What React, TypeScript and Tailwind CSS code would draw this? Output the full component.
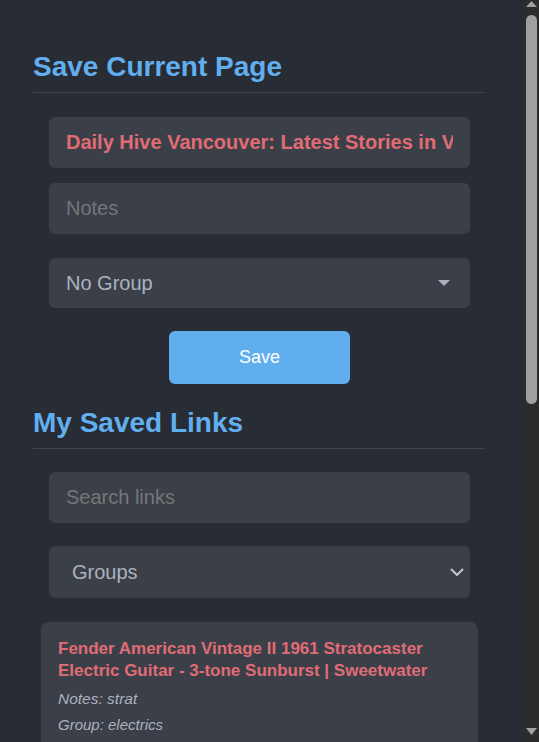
import React from "react";

function FakeScrollbar() {
  return (
    <div className="flex h-[742px] w-[15px] shrink-0 flex-col bg-[#2c2c2c]">
      <svg width="15" height="15" viewBox="0 0 15 15" className="shrink-0">
        <path d="M2 7 L13 7 L7.5 1 Z" fill="#a0a0a0" />
      </svg>
      <div className="mx-[2px] h-[389px] rounded-full bg-[#a0a0a0]" />
      <div className="flex-1" />
      <svg width="15" height="15" viewBox="0 0 15 15" className="shrink-0">
        <path d="M2 1 L13 1 L7.5 8 Z" fill="#a0a0a0" />
      </svg>
    </div>
  );
}

export default function App() {
  return (
    <div
      className="flex h-[742px] w-[539px] bg-[#282c34]"
      style={{ fontFamily: '"Liberation Sans", Arial, sans-serif' }}
    >
      <div className="h-[742px] flex-1 overflow-hidden">
        <div className="min-h-[1361px] pl-[33px] pt-[51px]">
          <section className="w-[452px]">
            <h2 className="border-b border-[#3e4451] pb-[9px] text-[28px] font-bold leading-[32px] text-[#61afef]">
              Save Current Page
            </h2>
            <div className="ml-4 mt-6 flex w-[421px] flex-col">
              <input
                readOnly
                defaultValue="Daily Hive Vancouver: Latest Stories in Vancouver, BC"
                className="h-[51px] w-full rounded-md bg-[#3b3f48] px-[17px] text-[20px] font-bold text-[#e06c75] outline-none"
              />
              <input
                placeholder="Notes"
                className="mt-[15px] h-[51px] w-full rounded-md bg-[#3b3f48] px-[17px] text-[20px] text-[#abb2bf] outline-none placeholder:text-[#767676]"
              />
              <div className="relative mt-6">
                <select className="h-[50px] w-full appearance-none rounded-md bg-[#3b3f48] px-[17px] text-[20px] text-[#abb2bf] outline-none">
                  <option>No Group</option>
                </select>
                <svg
                  className="pointer-events-none absolute right-[20px] top-[22px]"
                  width="12"
                  height="6"
                  viewBox="0 0 12 6"
                >
                  <path d="M0 0 H12 L6 6 Z" fill="#aab0bd" />
                </svg>
              </div>
              <button className="mx-auto mt-[23px] h-[53px] w-[181px] rounded-md bg-[#61aeee] text-[18px] text-white">
                Save
              </button>
            </div>
          </section>

          <section className="mt-[23px] w-[452px]">
            <h2 className="border-b border-[#3e4451] pb-[9px] text-[28px] font-bold leading-[32px] text-[#61afef]">
              My Saved Links
            </h2>
            <div className="ml-4 mt-[23px] flex w-[421px] flex-col">
              <input
                placeholder="Search links"
                className="h-[51px] w-full rounded-md bg-[#3b3f48] px-[17px] text-[20px] text-[#abb2bf] outline-none placeholder:text-[#767676]"
              />
              <div className="relative mt-[23px]">
                <select className="h-[52px] w-full appearance-none rounded-md bg-[#3b3f48] pl-[23px] pr-[17px] text-[20px] text-[#abb2bf] outline-none">
                  <option>Groups</option>
                </select>
                <svg
                  className="pointer-events-none absolute right-[6px] top-[22px]"
                  width="14"
                  height="8"
                  viewBox="0 0 14 8"
                >
                  <path
                    d="M1 1 L7 7 L13 1"
                    fill="none"
                    stroke="#c3c7cf"
                    strokeWidth="2"
                  />
                </svg>
              </div>
            </div>
            <div className="ml-2 mt-6 w-[437px] rounded-lg bg-[#3b3f48] px-[17px] pb-4 pt-4">
              <div className="text-[17px] font-bold leading-[22px] text-[#e06c75]">
                Fender American Vintage II 1961 Stratocaster Electric Guitar - 3-tone Sunburst | Sweetwater
              </div>
              <div className="mt-[7px] text-[15.5px] italic leading-[20px] text-[#abb2bf]">
                Notes: strat
              </div>
              <div className="mt-[6px] text-[15px] italic leading-[20px] text-[#abb2bf]">
                Group: electrics
              </div>
            </div>
          </section>
        </div>
      </div>
      <FakeScrollbar />
    </div>
  );
}
